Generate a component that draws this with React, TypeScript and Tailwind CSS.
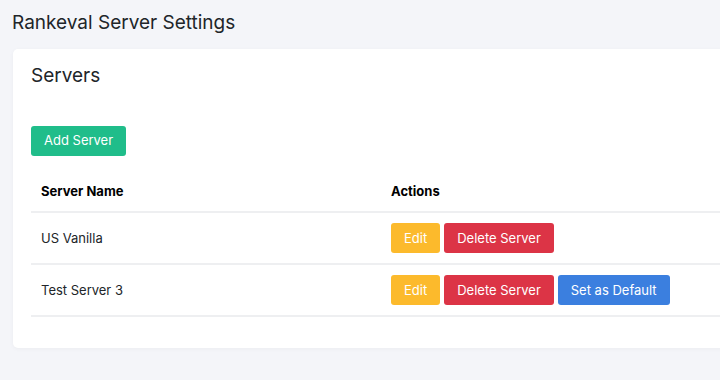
import React from 'react';

type Server = {
  id: number;
  name: string;
  isDefault: boolean;
};

const servers: Server[] = [
  { id: 1, name: 'US Vanilla', isDefault: true },
  { id: 2, name: 'Test Server 3', isDefault: false },
];

export default function App() {
  return (
    <div
      className="w-[720px] h-[380px] overflow-hidden bg-[#f4f5f9] text-[#212529]"
      style={{ fontFamily: 'Inter, "Noto Sans", sans-serif' }}
    >
      <div className="pl-[12px] pt-[11px]">
        <h1 className="text-[19px] leading-[24px] font-normal">Rankeval Server Settings</h1>

        <div className="mt-[14px] ml-px w-[900px] bg-white rounded-[5px] shadow-[0_1px_4px_rgba(0,0,0,0.04)] px-[18px] pt-[15px] pb-[31px]">
          <h2 className="text-[19px] leading-[24px] font-normal">Servers</h2>

          <button className="mt-[38px] h-[30px] px-[13px] rounded-[3px] bg-[#20bd8a] text-white text-[13px]">
            Add Server
          </button>

          <table className="mt-[10px] w-full text-[13px] leading-[20px] border-collapse">
            <thead>
              <tr className="border-b-2 border-[#eeeff1]">
                <th className="text-left font-bold text-black pl-[10px] pt-[15px] pb-[10px] w-[360px]">Server Name</th>
                <th className="text-left font-bold text-black pl-0 pt-[15px] pb-[10px]">Actions</th>
              </tr>
            </thead>
            <tbody>
              {servers.map((server) => (
                <tr key={server.id} className="border-b-2 border-[#eeeff1]">
                  <td className="pl-[10px] h-[52px]">{server.name}</td>
                  <td>
                    <div className="flex gap-[4px]">
                      <button className="h-[30px] px-[13px] rounded-[3px] bg-[#fcba2c] text-white">Edit</button>
                      <button className="h-[30px] px-[13px] rounded-[3px] bg-[#dc3446] text-white">Delete Server</button>
                      {!server.isDefault && (
                        <button className="h-[30px] px-[13px] rounded-[3px] bg-[#3b7fdf] text-white">Set as Default</button>
                      )}
                    </div>
                  </td>
                </tr>
              ))}
            </tbody>
          </table>
        </div>
      </div>
    </div>
  );
}
